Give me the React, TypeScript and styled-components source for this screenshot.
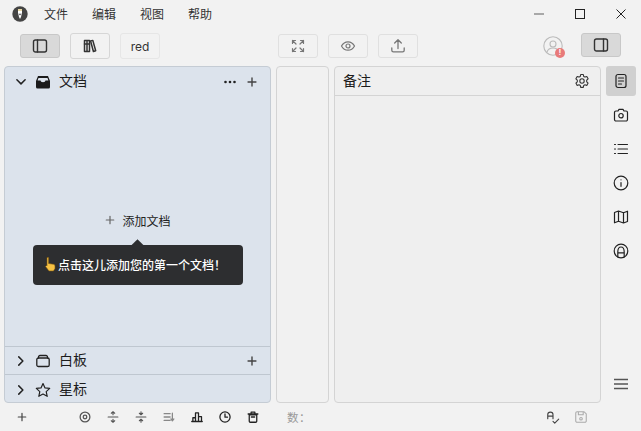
import React from "react";
import styled, { createGlobalStyle } from "styled-components";

const Global = createGlobalStyle`
  html, body { margin: 0; padding: 0; background: #f2f2f2; }
  body { font-family: "Noto Sans CJK SC", "Inter", sans-serif; }
  * { box-sizing: border-box; }
`;
const Page = styled.div`
  width: 641px; height: 431px; display: flex; flex-direction: column; overflow: hidden; background: #f2f2f2; color: #222;
`;
const TitleBar = styled.div`
  height: 27px; display: flex; align-items: center; padding-left: 12px;
`;
const Logo = styled.div`
  width: 16px; height: 16px; display: flex; margin-right: 16px;
`;
const MenuItem = styled.span`
  font-size: 12px; color: #333; width: 48px; line-height: 26px;
`;
const WinControls = styled.div`
  margin-left: auto; display: flex; align-items: center; height: 26px;
`;
const WinBtn = styled.div`
  width: 41px; height: 26px; display: flex; align-items: center; justify-content: center;
`;
const ToolBar = styled.div`
  height: 39px; display: grid; align-items: start; padding-left: 20px;
  padding-top: 6px; grid-template-columns: 258px 140px 125px 38px 40px;
`;
const Group = styled.div`
  display: flex; gap: 10px; align-items: center; height: 26px;
`;
const ToolBtn = styled.div<{ $active?: boolean; $strong?: boolean }>`
  width: 40px; height: ${p => (p.$strong ? 26 : 24)}px; display: flex; align-items: center; justify-content: center;
  border-radius: 3px; font-size: 12px; color: #333; font-family: "Inter", sans-serif;
  border: 1px solid ${p => (p.$active ? "#c8c8c8" : p.$strong ? "#d6d6d6" : "#e0e0e0")};
  background: ${p => (p.$active ? "#d9d9d9" : "transparent")};
`;
const TextBtn = styled(ToolBtn)`
  height: 26px; border-color: #e6e6e6;
`;
const Avatar = styled.div`
  position: relative; width: 20px; height: 20px; margin-top: 3px; display: flex;
`;
const AvatarBadge = styled.span`
  position: absolute; right: -2px; bottom: -2px; width: 10px; height: 10px; border-radius: 50%; background: #e87a7a;
  display: flex; align-items: center; justify-content: center; color: #fff; font-size: 7px; line-height: 10px; font-family: "Inter", sans-serif; font-weight: 700;
`;
const Main = styled.div`
  height: 337px; display: grid; grid-template-columns: 267px 53px 267px 30px; column-gap: 5px; padding-left: 4px;
`;
const DocsPanel = styled.div`
  background: #dce3ec; border: 1px solid #c5ccd4; border-radius: 4px; display: flex; flex-direction: column; overflow: hidden;
`;
const SectionHead = styled.div<{ $rule?: boolean; $h: number; $low?: boolean }>`
  height: ${p => p.$h}px; display: flex; align-items: center; flex: none; padding: ${p => (p.$low ? "2px" : "0")} 11px 0 10px;
  border-top: ${p => (p.$rule ? "1px solid #bfc7d0" : "none")};
`;
const Chevron = styled.span`
  width: 12px; height: 12px; display: flex; margin-right: 8px;
`;
const SecIcon = styled.span`
  width: 16px; height: 16px; display: flex; margin-right: 8px;
`;
const SecTitle = styled.span`
  font-size: 14px; color: #1c1c1c; line-height: 20px; padding-bottom: 3px;
`;
const SecActions = styled.span`
  margin-left: auto; display: flex; align-items: center; gap: 8px;
`;
const SmallIcon = styled.span`
  width: 14px; height: 14px; display: flex;
`;
const DocsBody = styled.div`
  flex: 1; display: flex; flex-direction: column; align-items: center; padding-top: 114px; position: relative;
`;
const AddDoc = styled.div`
  display: flex; align-items: center; gap: 6px; font-size: 12px; color: #222; height: 20px;
`;
const Tip = styled.div`
  position: absolute; left: 28px; top: 149px; width: 210px; height: 40px; background: #2d2e30; border-radius: 4px; color: #fff;
  display: flex; align-items: center; padding: 0 0 2px 11px; gap: 2px; font-size: 12px; font-weight: 500;
  &::before { content: ""; position: absolute; left: 100px; top: -4px; width: 9px; height: 9px; background: #2d2e30; transform: rotate(45deg); }
`;
const Blank = styled.div`
  background: #f1f1f1; border: 1px solid #d4d4d4; border-radius: 4px;
`;
const NotesPanel = styled(Blank)`
  display: flex; flex-direction: column; background: #efefef;
`;
const NotesHead = styled.div`
  height: 29px; border-bottom: 1px solid #d4d4d4; display: flex; align-items: center; justify-content: space-between; padding: 0 10px 0 8px;
  font-size: 14px; color: #1c1c1c; line-height: 20px;
`;
const NotesTitle = styled.span`
  padding-bottom: 2px;
`;
const Rail = styled.div`
  display: flex; flex-direction: column; gap: 4px;
`;
const RailBtn = styled.div<{ $active?: boolean }>`
  width: 30px; height: 30px; border-radius: 3px; display: flex; align-items: center; justify-content: center;
  background: ${p => (p.$active ? "#d0d0d0" : "transparent")};
`;
const RailEnd = styled(RailBtn)`
  margin-top: auto; margin-bottom: 4px;
`;
const StatusBar = styled.div`
  flex: 1; display: flex; align-items: center; padding-left: 16px;
`;
const StatusIcons = styled.div`
  display: flex; gap: 16px; margin-left: 51px; align-items: center;
`;
const Count = styled.span`
  font-size: 11.5px; color: #999; margin-left: 28px; letter-spacing: .5px;
`;
const StatusRight = styled.div`
  margin-left: auto; display: flex; gap: 14px; padding-right: 53px; align-items: center;
`;

type IP = { children: React.ReactNode; s?: number; c?: string; w?: number };
const Ic = ({ children, s = 16, c = "#333", w = 1.3 }: IP) => (
  <svg width={s} height={s} viewBox="0 0 16 16" fill="none" stroke={c} strokeWidth={w} strokeLinecap="round" strokeLinejoin="round">{children}</svg>
);
const Plus = ({ c = "#444" }: { c?: string }) => (
  <Ic s={12} c={c} w={1.6}><path d="M8 3v10M3 8h10" /></Ic>
);
const Down = () => <Ic s={12} c="#222" w={2}><path d="M2.500 5l5.500 5.500L13.500 5" /></Ic>;
const Right = () => <Ic s={12} c="#222" w={2}><path d="M5 2.500l5.500 5.500L5 13.500" /></Ic>;
const AddIcon = () => <SmallIcon><Ic s={14} c="#444" w={1.6}><path d="M8 3.500v9M3.500 8h9" /></Ic></SmallIcon>;

export default function App() {
  return (
    <Page>
      <Global />
      <TitleBar>
        <Logo>
          <svg width="16" height="16" viewBox="0 0 16 16">
            <circle cx="8" cy="8" r="7.700" fill="#444" />
            <path d="M6 3h4v3.400l-1 4.600-1 2-1-2-1-4.600z" fill="#fff" />
            <path d="M6 3h4v2H6z" fill="#e8d9a8" />
            <circle cx="8" cy="8.400" r=".8" fill="#444" />
          </svg>
        </Logo>
        <MenuItem>文件</MenuItem>
        <MenuItem>编辑</MenuItem>
        <MenuItem>视图</MenuItem>
        <MenuItem>帮助</MenuItem>
        <WinControls>
          <WinBtn><svg width="12" height="12" viewBox="0 0 12 12"><path d="M1 6h10" stroke="#777" strokeWidth="1.200" /></svg></WinBtn>
          <WinBtn><svg width="12" height="12" viewBox="0 0 12 12" fill="none"><rect x="1.500" y="1.500" width="9" height="9" stroke="#222" strokeWidth="1" /></svg></WinBtn>
          <WinBtn><svg width="12" height="12" viewBox="0 0 12 12" fill="none"><path d="M1.500 1.500l9 9M10.500 1.500l-9 9" stroke="#222" strokeWidth="1" /></svg></WinBtn>
        </WinControls>
      </TitleBar>
      <ToolBar>
        <Group>
          <ToolBtn $active>
            <Ic c="#333" w={1.400}><rect x="1.500" y="2" width="13" height="12" rx="2" /><path d="M5.500 2v12" /></Ic>
          </ToolBtn>
          <ToolBtn $strong>
            <Ic c="#333" w={1.500}><path d="M2.500 2.500h2.500v11H2.500zM5 2.500h2.500v11H5z" /><path d="M8.600 3l2.200-.6 2.900 10.400-2.300.7z" /><path d="M2.500 6h5" /></Ic>
          </ToolBtn>
          <TextBtn>red</TextBtn>
        </Group>
        <Group>
          <ToolBtn>
            <Ic c="#777" w={1.200}><path d="M2.500 2.500l3.500 3.500M13.500 2.500L10 6M2.500 13.500L6 10M13.500 13.500L10 10M2.500 5.500v-3h3M10.500 2.500h3v3M2.500 10.500v3h3M13.500 10.500v3h-3" /></Ic>
          </ToolBtn>
          <ToolBtn>
            <Ic c="#777" w={1.200}><path d="M1.500 8C3 5.200 5.300 3.800 8 3.800s5 1.400 6.500 4.200c-1.500 2.800-3.800 4.200-6.500 4.200S3 10.800 1.500 8z" /><circle cx="8" cy="8" r="2" /></Ic>
          </ToolBtn>
          <ToolBtn>
            <Ic c="#777" w={1.300}><path d="M8 10.500V2M4.700 5L8 1.800 11.300 5M1.800 10v2.200c0 .9.7 1.600 1.600 1.600h9.200c.9 0 1.600-.7 1.600-1.600V10" /></Ic>
          </ToolBtn>
        </Group>
        <span />
        <Avatar>
          <svg width="20" height="20" viewBox="0 0 20 20" fill="none" stroke="#bbb" strokeWidth="1.100">
            <circle cx="10" cy="10" r="9.200" /><circle cx="10" cy="8" r="3" /><path d="M4 16c1-3 3.500-4 6-4s5 1 6 4" />
          </svg>
          <AvatarBadge>!</AvatarBadge>
        </Avatar>
        <ToolBtn $active>
          <Ic c="#333" w={1.400}><rect x="1.500" y="2" width="13" height="12" rx="2" /><path d="M10.500 2v12" /></Ic>
        </ToolBtn>
      </ToolBar>
      <Main>
        <DocsPanel>
          <SectionHead $h={29}>
            <Chevron><Down /></Chevron>
            <SecIcon>
              <svg width="16" height="16" viewBox="0 0 16 16"><path d="M3 2h10l2 5v6a1.500 1.500 0 0 1-1.500 1.500h-11A1.500 1.500 0 0 1 1 13V7z" fill="#1b1b1b" /><path d="M3.500 4h9l.9 2.500H10.500a2.500 1.800 0 0 1-5 0H2.600z" fill="#dce3ec" /></svg>
            </SecIcon>
            <SecTitle>文档</SecTitle>
            <SecActions>
              <SmallIcon><svg width="14" height="14" viewBox="0 0 14 14" fill="#222"><circle cx="2.500" cy="7" r="1.300" /><circle cx="7" cy="7" r="1.300" /><circle cx="11.500" cy="7" r="1.300" /></svg></SmallIcon>
              <AddIcon />
            </SecActions>
          </SectionHead>
          <DocsBody>
            <AddDoc><Plus c="#666" />添加文档</AddDoc>
            <Tip>
              <svg width="12" height="16" viewBox="0 0 12 16"><path d="M3 1.500h1.600v6l5 .8c1 .2 1.400.9 1.400 1.700v2.500L9.500 15H5L1.500 10.500l.9-1L3 10z" fill="#f6c244" stroke="#7a5512" strokeWidth=".6" /></svg>
              点击这儿添加您的第一个文档！
            </Tip>
          </DocsBody>
          <SectionHead $rule $h={28}>
            <Chevron><Right /></Chevron>
            <SecIcon><Ic c="#222"><path d="M3.500 5V4a1.500 1.500 0 0 1 1.500-1.500h6A1.500 1.500 0 0 1 12.500 4v1" /><rect x="1.800" y="5" width="12.400" height="8.500" rx="1.600" /></Ic></SecIcon>
            <SecTitle>白板</SecTitle>
            <SecActions><AddIcon /></SecActions>
          </SectionHead>
          <SectionHead $rule $low $h={28}>
            <Chevron><Right /></Chevron>
            <SecIcon><Ic c="#222" w={1.200}><path d="M8 1.500l2 4.400 4.700.5-3.500 3.200 1 4.700L8 12l-4.200 2.300 1-4.700L1.300 6.400 6 5.900z" /></Ic></SecIcon>
            <SecTitle>星标</SecTitle>
          </SectionHead>
        </DocsPanel>
        <Blank />
        <NotesPanel>
          <NotesHead>
            <NotesTitle>备注</NotesTitle>
            <Ic s={16} c="#333" w={1.100}><circle cx="8" cy="8" r="2.200" /><path d="M6.700 1.500h2.600l.4 1.900 1.300.7 1.800-.6 1.300 2.300-1.400 1.300v1.700l1.400 1.300-1.300 2.300-1.800-.6-1.300.7-.4 1.900H6.700l-.4-1.900-1.300-.7-1.800.6-1.300-2.300 1.400-1.300V7.100L1.900 5.800l1.300-2.300 1.800.6 1.300-.7z" /></Ic>
          </NotesHead>
        </NotesPanel>
        <Rail>
          <RailBtn $active>
            <Ic c="#222" w={1.200}><rect x="3" y="1.500" width="10" height="13" rx="2" /><path d="M5.500 5h5M5.500 8h5M5.500 11h3" /></Ic>
          </RailBtn>
          <RailBtn><Ic c="#222" w={1.200}><path d="M1.500 5.500A1.500 1.500 0 0 1 3 4h2l1-1.600h4L11 4h2a1.500 1.500 0 0 1 1.500 1.500v7A1.500 1.500 0 0 1 13 14H3a1.500 1.500 0 0 1-1.500-1.500z" /><circle cx="8" cy="8.700" r="2.200" /></Ic></RailBtn>
          <RailBtn><Ic c="#222" w={1.100}><path d="M5 3.500h9.500M5 8h9.500M5 12.500h9.500M1.500 3.500h1M1.500 8h1M1.500 12.500h1" /></Ic></RailBtn>
          <RailBtn><Ic c="#222" w={1.200}><circle cx="8" cy="8" r="6.800" /><path d="M8 7.500v3.800M8 4.800h.01" /></Ic></RailBtn>
          <RailBtn><Ic c="#222" w={1.200}><path d="M1.500 3.500L5.500 2l5 1.700 4-1.500v10.300l-4 1.500-5-1.700-4 1.500zM5.500 2v10.300M10.500 3.700V14" /></Ic></RailBtn>
          <RailBtn><Ic c="#222" w={1.200}><circle cx="8" cy="8" r="6.800" /><path d="M4.800 14V9c0-3 1.400-5 3.200-5s3.200 2 3.200 5v5M4.800 9.800h6.400" /></Ic></RailBtn>
          <RailEnd><svg width="16" height="16" viewBox="0 0 16 16"><path d="M1 3.500h14M1 8h14M1 12.500h14" stroke="#555" strokeWidth="1.400" /></svg></RailEnd>
        </Rail>
      </Main>
      <StatusBar>
        <Plus c="#444" />
        <StatusIcons>
          <Ic s={12} c="#555" w={1.700}><circle cx="8" cy="8" r="6.500" /><circle cx="8" cy="8" r="2.400" /></Ic>
          <Ic s={12} c="#555" w={1.500}><path d="M1.500 8h13M8 1v4M5.800 3L8 1l2.200 2M8 15v-4M5.800 13L8 15l2.200-2" /></Ic>
          <Ic s={12} c="#555" w={1.500}><path d="M1.500 8h13M8 1v4M5.800 3L8 5l2.200-2M8 15v-4M5.800 13L8 11l2.200 2" /></Ic>
          <Ic s={12} c="#888" w={1.700}><path d="M1.500 3.500h8M1.500 8h8M1.500 12.500h8M12.500 3v10M10.500 10.500l2 2.500 2-2.500" /></Ic>
          <Ic s={12} c="#222" w={1.700}><path d="M1 14h14M2.500 14V9h3.500v5M6 14V2.500h4V14M10 14V7.500h4V14" /></Ic>
          <Ic s={12} c="#222" w={1.700}><circle cx="8" cy="8" r="6.800" /><path d="M8 4V8.300h3.300" /></Ic>
          <Ic s={12} c="#222" w={1.700}><path d="M3 5h10v8.500a1.500 1.500 0 0 1-1.500 1.500h-7A1.500 1.500 0 0 1 3 13.500zM1.500 4h13M5.500 3.500V1.500h5v2M5.800 8h4.400" /></Ic>
        </StatusIcons>
        <Count>数：</Count>
        <StatusRight>
          <Ic s={14} c="#444" w={1.300}><path d="M2 10V5.500a3 3 0 0 1 6 0V10M2 7h6M8 13l2 2 4.500-4.500" /></Ic>
          <Ic s={14} c="#aaa" w={1.200}><path d="M2 3.500A1.500 1.500 0 0 1 3.500 2h8L14 4.500v8a1.500 1.500 0 0 1-1.500 1.500h-9A1.500 1.500 0 0 1 2 12.500zM5 2v3.500h5.500V2" /><circle cx="8" cy="10" r="1.500" /></Ic>
        </StatusRight>
      </StatusBar>
    </Page>
  );
}
